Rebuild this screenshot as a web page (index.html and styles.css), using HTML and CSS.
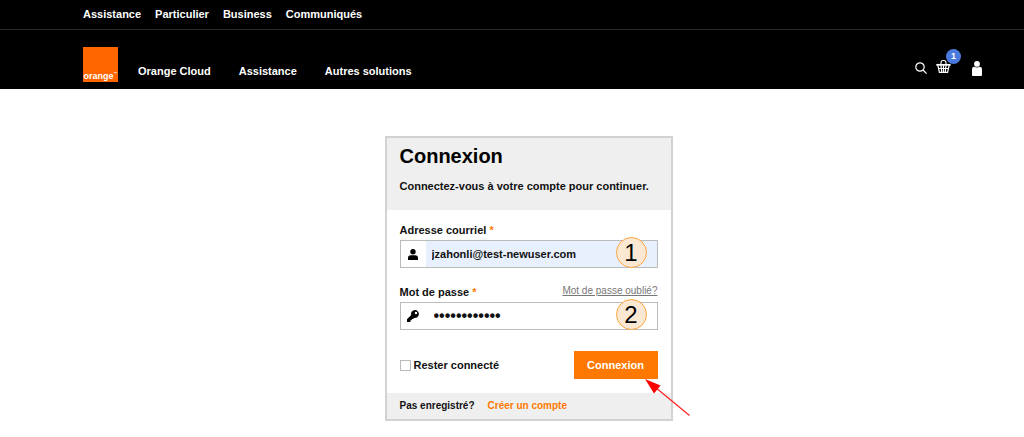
FILE: index.html
```
<!DOCTYPE html>
<html lang="fr">
<head>
	<meta charset="utf-8">
	<meta name="viewport" content="width=device-width, initial-scale=1">
	<title>Connexion</title>
	<link rel="stylesheet" href="styles.css">
</head>
<body>

<header class="header">
	<nav class="topbar">
		<a href="#">Assistance</a>
		<a href="#">Particulier</a>
		<a href="#">Business</a>
		<a href="#">Communiqués</a>
	</nav>

	<div class="mainbar">
		<a class="logo" href="#">orange<span class="tm">™</span></a>
		<nav class="menu">
			<a href="#">Orange Cloud</a>
			<a href="#">Assistance</a>
			<a href="#">Autres solutions</a>
		</nav>
		<div class="tools">
			<a class="search" href="#" aria-label="Rechercher">
				<svg width="12" height="12" viewBox="0 0 12 12" fill="none" stroke="#fff" stroke-width="1.2"><circle cx="5" cy="5" r="4.2"/><path d="M8 8l3.6 3.6"/></svg>
			</a>
			<a class="basket" href="#" aria-label="Panier">
				<svg width="15" height="14" viewBox="0 0 15 14" fill="none" stroke="#fff">
					<path d="M5 5V2.500q0-2 2.500-2t2.500 2V5" stroke-width="1.100"/>
					<path d="M.3 4.800h14.400" stroke-width="1.700"/>
					<path d="M1.800 5l1.600 7.300h8.200L13.200 5M5 5l.7 7M7.500 5v7M10 5l-.7 7M2.400 8.500h10.200" stroke-width="1.200"/>
				</svg>
				<span class="badge">1</span>
			</a>
			<a class="account" href="#" aria-label="Compte">
				<svg width="10" height="15" viewBox="0 0 10 15" fill="#fff"><circle cx="5" cy="2.900" r="2.900"/><path d="M2 5.800q3 1.300 6 0 2 .3 2 2.500V14q0 1-1 1H1q-1 0-1-1V8.300Q0 6.100 2 5.800z"/></svg>
			</a>
		</div>
	</div>
</header>

<main class="content">
	<form class="card">
		<div class="card-head">
			<h1>Connexion</h1>
			<p>Connectez-vous à votre compte pour continuer.</p>
		</div>

		<div class="card-body">
			<div class="label-row">
				<label for="email">Adresse courriel <span class="required">*</span></label>
			</div>
			<div class="field">
				<span class="field-icon">
					<svg width="10" height="11" viewBox="0 0 10 11"><circle cx="5" cy="2.700" r="2.700"/><path d="M0 11V9q0-2.800 2.800-2.800h4.400Q10 6.200 10 9v2z"/></svg>
				</span>
				<input class="filled" type="email" id="email" value="jzahonli@test-newuser.com">
				<span class="step">1</span>
			</div>

			<div class="label-row">
				<label for="password">Mot de passe <span class="required">*</span></label>
				<a class="forgot" href="#">Mot de passe oublié?</a>
			</div>
			<div class="field">
				<span class="field-icon">
					<svg width="12" height="12" viewBox="0 0 12 12"><path fill-rule="evenodd" d="M8 0a4 4 0 1 1-1 7.900L6 9H4.800v1.300H3.400V12H0V9.200l4.200-4.100A4 4 0 0 1 8 0zm1 1.800a1.200 1.200 0 1 0 0 2.400 1.200 1.200 0 0 0 0-2.400z"/></svg>
				</span>
				<input class="secret" type="password" id="password" value="motdepasse12">
				<span class="step">2</span>
			</div>

			<div class="actions">
				<label class="remember"><input type="checkbox"> Rester connecté</label>
				<button class="submit" type="submit">Connexion</button>
				<svg class="arrow" width="46" height="38" viewBox="0 0 46 38"><path d="M10 8l34.500 28.500" stroke="#f22" stroke-width="1.200"/><path d="M0 0l15.500 6.500-6.500 8z" fill="#f00"/></svg>
			</div>
		</div>

		<div class="card-foot">
			<span>Pas enregistré?</span>
			<a href="#">Créer un compte</a>
		</div>
	</form>
</main>

</body>
</html>
```
FILE: styles.css
```
*{
	box-sizing: border-box;
}
body{
	margin: 0;
	font-family: "Liberation Sans", Arial, sans-serif;
	font-size: 11px;
	font-weight: bold;
	line-height: 16px;
	color: #111;
	background-color: white;
}
a{
	color: inherit;
	text-decoration: none;
}
svg{
	display: block;
}

/* header */
.header{
	color: white;
	background-color: black;
}
.topbar{
	display: flex;
	gap: 14px;
	padding: 6px 42px 7px 83px;
	border-bottom: 1px solid #2b2b2b;
}
.mainbar{
	display: flex;
	align-items: flex-end;
	padding: 17px 42px 7px 83px;
}
.logo{
	display: flex;
	align-items: flex-end;
	justify-content: center;
	width: 35px;
	height: 35px;
	font-size: 9px;
	line-height: 12px;
	background-color: #ff6600;
}
.tm{
	font-size: 4px;
	line-height: 16px;
}
.menu{
	display: flex;
	gap: 28px;
	margin-left: 20px;
	padding-bottom: 3px;
}
.tools{
	display: flex;
	align-items: flex-end;
	margin-left: auto;
	padding-bottom: 6px;
}
.search{
	padding-bottom: 2px;
}
.basket{
	position: relative;
	margin: 0 21px 0 9px;
	padding-bottom: 2px;
}
.badge{
	position: absolute;
	top: -11px;
	left: 10px;
	width: 15px;
	height: 15px;
	border-radius: 50%;
	font-size: 9px;
	line-height: 15px;
	text-align: center;
	background-color: #4a7bdc;
}

/* login card */
.content{
	display: flex;
	justify-content: center;
	padding: 47px 50px 17px 83px;
}
.card{
	width: 288px;
	border: 2px solid #d2d2d2;
}
.card-head{
	padding: 5px 13px 16px;
	background-color: #efefef;
}
.card-head h1{
	margin: 0;
	font-size: 20px;
	line-height: 26px;
	color: black;
}
.card-head p{
	margin: 9px 0 0;
}
.card-body{
	padding: 12px 13px 14px;
}
.label-row{
	display: flex;
	justify-content: space-between;
	margin-bottom: 2px;
}
.required{
	color: #ff7900;
}
.forgot{
	font-size: 10px;
	font-weight: normal;
	line-height: 13px;
	color: #777;
	text-decoration: underline;
}
.field{
	display: flex;
	position: relative;
	height: 28px;
	margin-bottom: 16px;
	border: 1px solid #bbb;
}
.field-icon{
	display: flex;
	align-items: center;
	justify-content: center;
	width: 25px;
}
.field input{
	flex: 1;
	min-width: 0;
	padding: 0 6px;
	border: 0;
	outline: 0;
	font: inherit;
	color: #111;
	background-color: white;
}
.field .filled{
	background-color: #e8f0fe;
}
.field .secret{
	padding: 0 8px;
	font-size: 16px;
}
.step{
	position: absolute;
	top: -4px;
	right: 10px;
	width: 31px;
	height: 31px;
	border: 1px solid #ffa640;
	border-radius: 50%;
	font-size: 24px;
	font-weight: normal;
	line-height: 30px;
	text-align: center;
	color: black;
	background-color: #fbe8d3;
}
.actions{
	display: flex;
	position: relative;
	align-items: center;
	justify-content: space-between;
	margin-top: 21px;
}
.remember{
	display: flex;
	align-items: center;
	gap: 3px;
}
.remember input{
	appearance: none;
	width: 11px;
	height: 11px;
	margin: 0;
	border: 1px solid #bbb;
	background-color: white;
}
.submit{
	width: 84px;
	height: 28px;
	padding: 0;
	border: 0;
	font: inherit;
	color: white;
	background-color: #ff7900;
}
/* points at the submit button */
.arrow{
	position: absolute;
	top: 28px;
	right: -33px;
}
.card-foot{
	display: flex;
	gap: 13px;
	padding: 5px 13px;
	font-size: 10px;
	background-color: #efefef;
}
.card-foot a{
	color: #ff7900;
}
```
